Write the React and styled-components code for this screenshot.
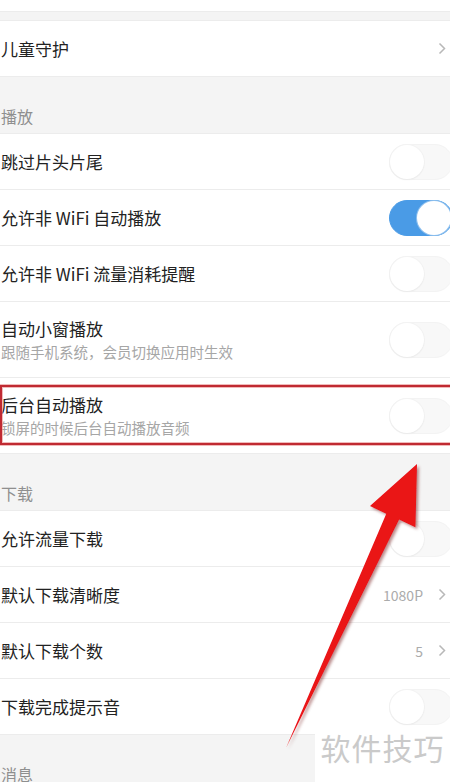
import React from "react";
import styled, { createGlobalStyle } from "styled-components";

const GlobalStyle = createGlobalStyle`
  html, body {
    margin: 0;
    padding: 0;
    background: #f4f4f4;
  }
  body {
    font-family: "Noto Sans CJK SC", "Noto Sans", sans-serif;
  }
`;

const Page = styled.div`
  position: relative;
  width: 450px;
  height: 782px;
  overflow: hidden;
  background: #f4f4f4;
`;

const TopStub = styled.div`
  height: 12px;
  box-sizing: border-box;
  background: #fff;
  border-bottom: 1px solid #ececec;
`;

const Gap = styled.div`
  height: 8px;
`;

const Group = styled.div`
  background: #fff;
  border-top: 1px solid #ececec;
`;

const SectionHeader = styled.div`
  height: 56px;
  box-sizing: border-box;
  display: flex;
  align-items: flex-end;
  padding: 0 0 7px 1px;
  font-size: 16px;
  line-height: 20px;
  color: #8f8f8f;
`;

const Row = styled.div`
  height: ${(p) => (p.$tall ? 76 : 56)}px;
  box-sizing: border-box;
  display: flex;
  align-items: center;
  justify-content: space-between;
  padding-left: 1px;
  border-bottom: 1px solid #ececec;
  background: #fff;
`;

const TextBlock = styled.div`
  display: flex;
  flex-direction: column;
`;

const Title = styled.div`
  font-size: 17px;
  line-height: 24px;
  color: #222;
`;

const Sub = styled.div`
  font-size: 14.5px;
  line-height: 22px;
  color: #a6a6a6;
`;

const Trail = styled.div`
  display: flex;
  align-items: center;
  gap: 15px;
  padding-right: 4px;
  font-size: 14px;
  color: #ababab;
`;

const Chevron = styled.svg`
  width: 8px;
  height: 13px;
  display: block;
`;

const Track = styled.div`
  position: relative;
  width: 64px;
  height: 36px;
  margin-right: -3px;
  border-radius: 18px;
  box-sizing: border-box;
  background: ${(p) => (p.$on ? "#4a9be6" : "#f8f8f8")};
  border: 1px solid ${(p) => (p.$on ? "#4a9be6" : "#f3f3f3")};
`;

const Knob = styled.div`
  position: absolute;
  top: 0px;
  left: ${(p) => (p.$on ? "27px" : "0px")};
  width: 34px;
  height: 34px;
  border-radius: 50%;
  background: #fff;
  box-shadow: ${(p) =>
    p.$on ? "0 0 0 1px #8fc0ee" : "0 1px 2px rgba(0,0,0,0.04), 0 0 0 1px #f3f3f3"};
`;

const Highlight = styled.div`
  position: absolute;
  left: 0;
  right: -4px;
  top: 385px;
  height: 60px;
  box-sizing: border-box;
  border: 2px solid #c02a32;
  box-shadow: 0 0 0 1px rgba(232, 140, 140, 0.6),
    inset 0 0 0 1px rgba(232, 140, 140, 0.6);
`;

const ArrowLayer = styled.svg`
  position: absolute;
  left: 0;
  top: 0;
  width: 450px;
  height: 782px;
  pointer-events: none;
`;

const Watermark = styled.div`
  position: absolute;
  right: 0;
  bottom: 0;
  width: 135px;
  height: 50px;
  background: #fff;
  display: flex;
  justify-content: center;
  font-size: 30px;
  line-height: 30px;
  padding-top: 1px;
  color: #cacaca;
  letter-spacing: 1px;
`;

const Toggle = ({ on }) => (
  <Track $on={on}>
    <Knob $on={on} />
  </Track>
);

const Arrow = () => (
  <Chevron viewBox="0 0 8 13">
    <path d="M1.5 1.5 L6.5 6.5 L1.5 11.5" fill="none" stroke="#b8b8b8" strokeWidth="1.5" />
  </Chevron>
);

const playRows = [
  { title: "跳过片头片尾", on: false },
  { title: "允许非 WiFi 自动播放", on: true },
  { title: "允许非 WiFi 流量消耗提醒", on: false },
  { title: "自动小窗播放", sub: "跟随手机系统，会员切换应用时生效", on: false },
  { title: "后台自动播放", sub: "锁屏的时候后台自动播放音频", on: false },
];

const downloadRows = [
  { title: "允许流量下载", toggle: true },
  { title: "默认下载清晰度", value: "1080P" },
  { title: "默认下载个数", value: "5" },
  { title: "下载完成提示音", toggle: true },
];

export default function App() {
  return (
    <>
      <GlobalStyle />
      <Page>
        <TopStub />
        <Gap />
        <Group>
          <Row>
            <Title>儿童守护</Title>
            <Trail>
              <Arrow />
            </Trail>
          </Row>
        </Group>

        <SectionHeader>播放</SectionHeader>
        <Group>
          {playRows.map((r) => (
            <Row key={r.title} $tall={!!r.sub}>
              <TextBlock>
                <Title>{r.title}</Title>
                {r.sub && <Sub>{r.sub}</Sub>}
              </TextBlock>
              <Toggle on={r.on} />
            </Row>
          ))}
        </Group>

        <SectionHeader>下载</SectionHeader>
        <Group>
          {downloadRows.map((r) => (
            <Row key={r.title}>
              <Title>{r.title}</Title>
              {r.toggle ? (
                <Toggle on={false} />
              ) : (
                <Trail>
                  {r.value}
                  <Arrow />
                </Trail>
              )}
            </Row>
          ))}
        </Group>

        <SectionHeader>消息</SectionHeader>

        <Highlight />
        <ArrowLayer viewBox="0 0 450 782">
          <defs>
            <filter id="sh" x="-20%" y="-20%" width="140%" height="140%">
              <feDropShadow dx="2" dy="2" stdDeviation="1.5" floodColor="#600" floodOpacity="0.45" />
            </filter>
          </defs>
          <polygon
            points="417,464 415.4,527.2 399.1,519.6 286,748 386.3,513.8 370,506"
            fill="#ea1219"
            filter="url(#sh)"
          />
        </ArrowLayer>
        <Watermark>软件技巧</Watermark>
      </Page>
    </>
  );
}
